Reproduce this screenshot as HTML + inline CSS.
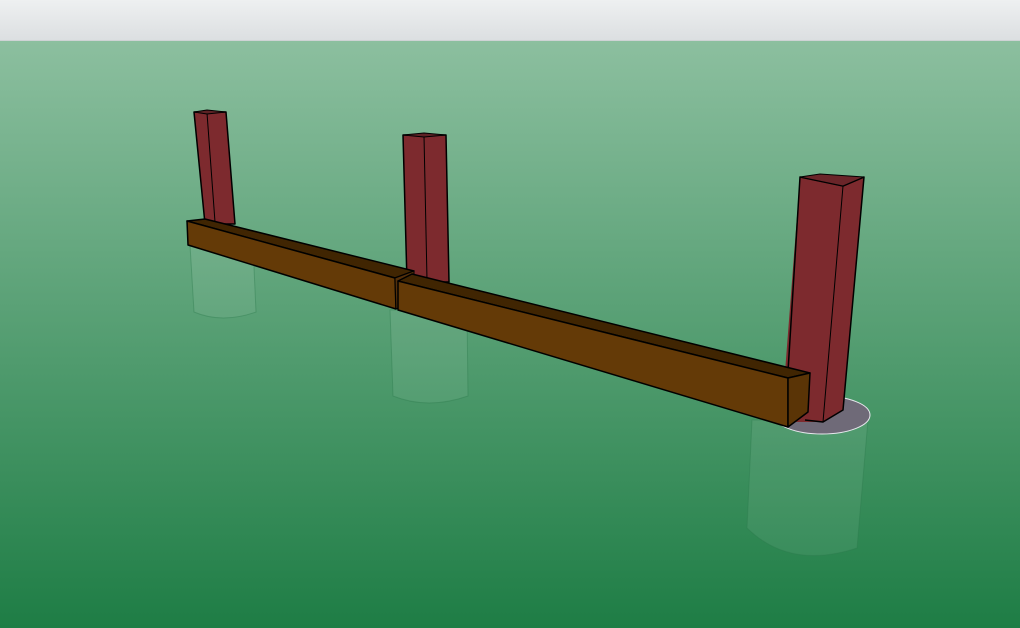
<!DOCTYPE html>
<html><head><style>
html,body{margin:0;padding:0;width:1020px;height:628px;overflow:hidden}
.top{position:absolute;left:0;top:0;width:1020px;height:40px;background:linear-gradient(#eef0f1,#dcdfe1);border-bottom:1px solid #cfd3d5}
.bg{position:absolute;left:0;top:41px;width:1020px;height:587px;background:linear-gradient(#8cbf9f,#1e7d45)}
svg{position:absolute;left:0;top:0}
</style></head><body>
<div class="top"></div><div class="bg"></div>
<svg width="1020" height="628" viewBox="0 0 1020 628">
<g fill="#ffffff" fill-opacity="0.07" stroke="#2d7a4d" stroke-opacity="0.4" stroke-width="1">
<path d="M190,245 L194,312 Q222,324 256,312 L253,245 Z"/>
<path d="M390,310 L393,396 Q428,410 468,396 L467,310 Z"/>
<path d="M752,420 L747,528 Q790,570 857,548 L868,420 Z"/>
</g>
<ellipse cx="822" cy="415" rx="48" ry="19" fill="#6f6a78" stroke="#e8e8ee" stroke-width="1"/>
<g stroke="#000" stroke-width="1.5" stroke-linejoin="round">
<!-- post 1 -->
<polygon points="194,112 226,112 235,224 205,224" fill="#7d2a2e"/>
<line x1="207" y1="113" x2="215" y2="222" stroke-width="1"/>
<polygon points="194,112 207,110 226,112 207,114" fill="#5e2225" stroke-width="1"/>
<!-- post 2 -->
<polygon points="403,135 446,135 449,282 407,282" fill="#7d2a2e"/>
<line x1="424" y1="136" x2="427" y2="280" stroke-width="1"/>
<polygon points="403,135 424,133 446,135 424,137" fill="#5e2225" stroke-width="1"/>
<!-- beam 1 -->
<polygon points="187,221 205,219 414,271 395,278" fill="#402502"/>
<polygon points="187,221 395,278 396,309 188,245" fill="#643a07"/>
<polygon points="395,278 414,271 414,301 396,309" fill="#54300a" stroke-width="1"/>
<!-- post 3 -->
<polygon points="800,177 843,186 864,177 843,410 823,422 785,422 785,372" fill="#7d2a2e" stroke="none"/>
<polyline points="785,420 800,177 843,186 864,177 843,410 823,422 805,420" fill="none"/>
<line x1="843" y1="186" x2="823" y2="422" stroke-width="1"/>
<polygon points="800,177 820,174 864,177 843,186" fill="#6a2529" stroke-width="1"/>
<!-- beam 2 -->
<polygon points="398,281 412,274 810,373 788,378" fill="#402502"/>
<polygon points="398,281 788,378 788,427 398,310" fill="#643a07"/>
<polygon points="788,378 810,373 808,412 788,427" fill="#5a3406"/>
</g>
</svg>
</body></html>
